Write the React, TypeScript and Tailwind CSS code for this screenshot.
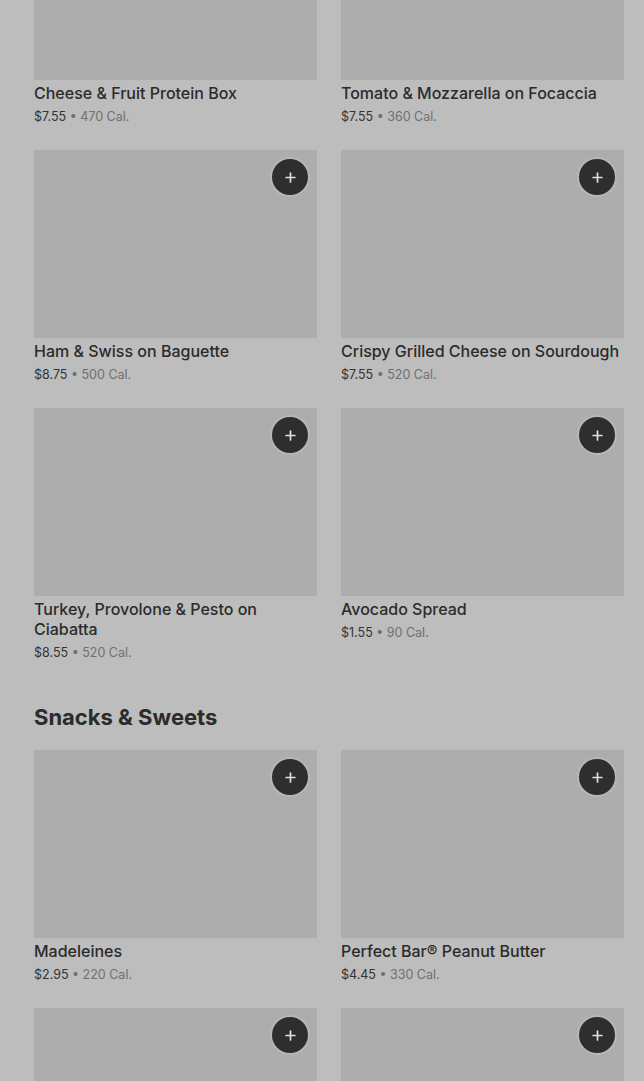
import { Plus } from "lucide-react";

type Item = { name: string; price: string; cal: string };

const sandwiches: Item[] = [
  { name: "Cheese & Fruit Protein Box", price: "$7.55", cal: "470 Cal." },
  { name: "Tomato & Mozzarella on Focaccia", price: "$7.55", cal: "360 Cal." },
  { name: "Ham & Swiss on Baguette", price: "$8.75", cal: "500 Cal." },
  { name: "Crispy Grilled Cheese on Sourdough", price: "$7.55", cal: "520 Cal." },
  { name: "Turkey, Provolone & Pesto on Ciabatta", price: "$8.55", cal: "520 Cal." },
  { name: "Avocado Spread", price: "$1.55", cal: "90 Cal." },
];

const snacks: Item[] = [
  { name: "Madeleines", price: "$2.95", cal: "220 Cal." },
  { name: "Perfect Bar® Peanut Butter", price: "$4.45", cal: "330 Cal." },
];

function AddButton() {
  return (
    <button className="absolute top-[9px] right-[9px] w-9 h-9 rounded-full bg-[#2e2e2e] flex items-center justify-center shadow-[0_0_0_2px_rgba(255,255,255,0.12)]">
      <Plus className="w-[15px] h-[15px] text-[#dedede]" strokeWidth={2.75} />
    </button>
  );
}

function ItemCard({ item, hideButton }: { item: Item; hideButton?: boolean }) {
  return (
    <div className="flex flex-col">
      <div className="relative h-[188px] bg-[#adadad]">{!hideButton && <AddButton />}</div>
      <p className="mt-[3px] text-[16px] leading-[20px] font-medium text-[#2b2b2b]">{item.name}</p>
      <p className="mt-[5px] text-[12.5px] leading-[18px]">
        <span className="text-[#333333]">{item.price}</span>
        <span className="text-[#6f6f6f]"> • {item.cal}</span>
      </p>
    </div>
  );
}

export default function App() {
  return (
    <div className="h-[1081px] overflow-hidden bg-[#bdbdbd] font-['Inter',sans-serif]">
      <div className="pl-[34px] pr-[20px] mt-[-108px]">
        {/* Sandwiches */}
        <div className="grid grid-cols-2 gap-x-6 gap-y-[24px]">
          {sandwiches.map((item, i) => (
            <ItemCard key={item.name} item={item} hideButton={i < 2} />
          ))}
        </div>

        {/* Snacks & Sweets */}
        <h2 className="mt-[41px] mb-[19px] text-[22px] leading-[28px] font-bold text-[#2b2b2b]">
          Snacks &amp; Sweets
        </h2>
        <div className="grid grid-cols-2 gap-x-6 gap-y-[24px]">
          {snacks.map((item) => (
            <ItemCard key={item.name} item={item} />
          ))}
          <div className="relative h-[188px] bg-[#adadad]">
            <AddButton />
          </div>
          <div className="relative h-[188px] bg-[#adadad]">
            <AddButton />
          </div>
        </div>
      </div>
    </div>
  );
}
